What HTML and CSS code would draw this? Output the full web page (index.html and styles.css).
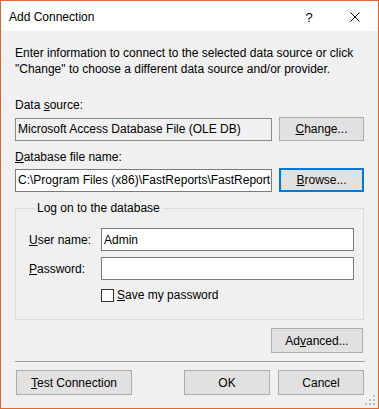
FILE: index.html
```html
<!DOCTYPE html>
<html lang="en">

<head>
    <meta charset="UTF-8">
    <title>Add Connection</title>
    <link rel="stylesheet" href="styles.css">
</head>

<body>
    <div class="window">
        <div class="title-bar">
            <span class="title">Add Connection</span>
            <span class="caption-btn help">?</span>
            <span class="caption-btn close">
                <svg width="10" height="10" viewBox="0 0 10 10">
                    <path d="M0.5 0.5 L9.5 9.5 M9.5 0.5 L0.5 9.5" stroke="#000" stroke-width="1" fill="none" />
                </svg>
            </span>
        </div>

        <div class="content">
            <p class="intro">Enter information to connect to the selected data source or click<br>"Change" to choose a different data source and/or provider.</p>

            <div class="label first">Data <u>s</u>ource:</div>
            <div class="field-row">
                <input type="text" class="textbox readonly" value="Microsoft Access Database File (OLE DB)" readonly>
                <button type="button" class="btn side"><u>C</u>hange...</button>
            </div>

            <div class="label"><u>D</u>atabase file name:</div>
            <div class="field-row">
                <input type="text" class="textbox" value="C:\Program Files (x86)\FastReports\FastReport Studio\Demos\Main Demo\demo.mdb">
                <button type="button" class="btn side default"><u>B</u>rowse...</button>
            </div>

            <fieldset class="group">
                <legend>Log on to the database</legend>
                <div class="login-row">
                    <label><u>U</u>ser name:</label>
                    <input type="text" class="textbox" value="Admin">
                </div>
                <div class="login-row">
                    <label><u>P</u>assword:</label>
                    <input type="password" class="textbox" value="">
                </div>
                <div class="check-row">
                    <span class="checkbox"></span>
                    <span><u>S</u>ave my password</span>
                </div>
            </fieldset>

            <div class="advanced-row">
                <button type="button" class="btn advanced">Ad<u>v</u>anced...</button>
            </div>

            <div class="separator"></div>

            <div class="footer">
                <button type="button" class="btn test"><u>T</u>est Connection</button>
                <div class="footer-right">
                    <button type="button" class="btn dlg">OK</button>
                    <button type="button" class="btn dlg">Cancel</button>
                </div>
            </div>
        </div>

        <svg class="grip" width="11" height="11" viewBox="0 0 11 11">
            <rect x="8" y="0" width="2" height="2" fill="#bcbcbc" />
            <rect x="4" y="4" width="2" height="2" fill="#bcbcbc" />
            <rect x="8" y="4" width="2" height="2" fill="#bcbcbc" />
            <rect x="0" y="8" width="2" height="2" fill="#bcbcbc" />
            <rect x="4" y="8" width="2" height="2" fill="#bcbcbc" />
            <rect x="8" y="8" width="2" height="2" fill="#bcbcbc" />
        </svg>
    </div>
</body>

</html>
```
FILE: styles.css
```css
* {
    margin: 0;
    padding: 0;
    box-sizing: border-box;
}

body {
    font-family: "Liberation Sans", Arial, sans-serif;
    font-size: 12px;
    color: #000;
    background: #f0f0f0;
}

.window {
    position: relative;
    width: 379px;
    height: 409px;
    border: 1px solid #da6a2f;
    background: #f0f0f0;
}

.title-bar {
    display: flex;
    align-items: center;
    height: 30px;
    background: #fff;
    padding-left: 8px;
}

.title {
    flex: 1;
    line-height: 16px;
    padding-top: 1px;
}

.caption-btn {
    width: 46px;
    height: 30px;
    display: flex;
    align-items: center;
    justify-content: center;
}

.help {
    font-size: 13px;
    padding-top: 2px;
}

.close svg {
    display: block;
    margin-top: 1px;
}

.content {
    padding: 0 14px;
}

.intro {
    margin-top: 14px;
    line-height: 16px;
}

.label {
    margin-top: 8px;
    line-height: 16px;
    margin-bottom: 3px;
}

.label.first {
    margin-top: 20px;
    margin-bottom: 4px;
}

u {
    text-decoration: underline;
    text-underline-offset: 1px;
}

.field-row {
    display: flex;
    align-items: center;
    gap: 7px;
    height: 24px;
}

.textbox {
    font: inherit;
    color: #000;
    height: 23px;
    border: 1px solid #7a7a7a;
    background: #fff;
    padding: 0 1px 0 2px;
    outline: none;
}

.field-row .textbox {
    width: 257px;
}

.textbox.readonly {
    background: #f0f0f0;
    border-color: #8a8a8a;
}

.btn {
    font: inherit;
    color: #000;
    background: #e1e1e1;
    border: 1px solid #adadad;
    height: 24px;
}

.btn.side {
    width: 85px;
}

.btn.default {
    border: 2px solid #0078d7;
}

.group {
    margin-top: 8px;
    border: 1px solid #dcdcdc;
    padding: 12px 9px 17px 13px;
    min-width: 0;
}

.group legend {
    margin-left: 6px;
    padding: 0 2px;
    line-height: 16px;
}

.login-row {
    display: flex;
    align-items: center;
    margin-bottom: 6px;
}

.login-row label {
    width: 72px;
}

.login-row .textbox {
    flex: 1;
}

.check-row {
    display: flex;
    align-items: center;
    gap: 3px;
    margin-top: 8px;
    margin-left: 72px;
    line-height: 14px;
}

.checkbox {
    width: 13px;
    height: 13px;
    border: 1px solid #333;
    background: #fff;
}

.advanced-row {
    display: flex;
    justify-content: flex-end;
    margin-top: 8px;
    padding-right: 1px;
}

.btn.advanced {
    width: 92px;
    height: 25px;
}

.separator {
    margin-top: 8px;
    height: 1px;
    background: #a0a0a0;
    margin-right: -1px;
}

.footer {
    display: flex;
    justify-content: space-between;
    margin-top: 8px;
}

.btn.test {
    width: 116px;
    height: 25px;
    margin-left: 1px;
}

.footer-right {
    display: flex;
    gap: 8px;
}

.btn.dlg {
    width: 86px;
    height: 25px;
}

.grip {
    position: absolute;
    right: 2px;
    bottom: 2px;
}
```
